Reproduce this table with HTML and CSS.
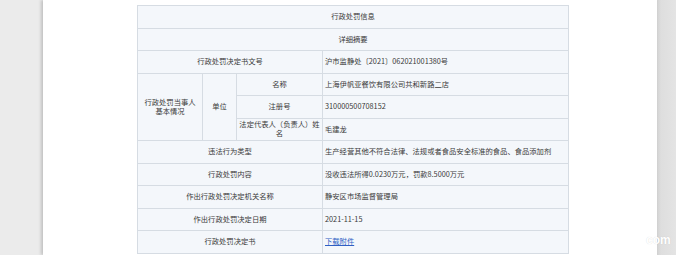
FILE: index.html
```html
<!DOCTYPE html>
<html lang="zh">
<head>
<meta charset="utf-8">
<link rel="stylesheet" href="styles.css">
</head>
<body>
<div class="page">
  <div class="side-left"></div>
  <div class="main">
    <table class="info">
      <colgroup>
        <col class="c1"><col class="c2"><col class="c3"><col class="c4">
      </colgroup>
      <tr><td colspan="4" class="head">行政处罚信息</td></tr>
      <tr><td colspan="4" class="head">详细摘要</td></tr>
      <tr><td colspan="3" class="label">行政处罚决定书文号</td><td class="val">沪市监静处〔2021〕062021001380号</td></tr>
      <tr>
        <td rowspan="3" class="label">行政处罚当事人<br>基本情况</td>
        <td rowspan="3" class="label">单位</td>
        <td class="label">名称</td>
        <td class="val">上海伊帆亚餐饮有限公司共和新路二店</td>
      </tr>
      <tr><td class="label">注册号</td><td class="val">310000500708152</td></tr>
      <tr><td class="label tight">法定代表人（负责人）姓名</td><td class="val">毛建龙</td></tr>
      <tr><td colspan="3" class="label">违法行为类型</td><td class="val">生产经营其他不符合法律、法规或者食品安全标准的食品、食品添加剂</td></tr>
      <tr><td colspan="3" class="label">行政处罚内容</td><td class="val">没收违法所得0.0230万元，罚款8.5000万元</td></tr>
      <tr><td colspan="3" class="label">作出行政处罚决定机关名称</td><td class="val">静安区市场监督管理局</td></tr>
      <tr><td colspan="3" class="label">作出行政处罚决定日期</td><td class="val">2021-11-15</td></tr>
      <tr><td colspan="3" class="label">行政处罚决定书</td><td class="val"><a href="#" class="dl">下载附件</a></td></tr>
    </table>
  </div>
  <div class="side-right"></div>
  <span class="mark">com</span>
</div>
</body>
</html>
```

FILE: styles.css
```css
html, body {
  margin: 0;
  padding: 0;
  background: #ebebeb;
}
.page {
  position: relative;
  display: flex;
  width: 676px;
  height: 255px;
  overflow: hidden;
  font-family: "Noto Sans CJK SC", "Noto Sans", sans-serif;
}
.side-left {
  width: 43px;
  background: #ebebeb;
  flex: none;
}
.main {
  flex: 1;
  background: #ffffff;
  box-shadow: -2px 0 3px rgba(0, 0, 0, 0.18);
  padding: 5px 0 0 94px;
  position: relative;
  z-index: 1;
}
.side-right {
  width: 19px;
  flex: none;
  background: linear-gradient(to right, #d2d2d2 0, #dedede 4px, #e4e4e4 100%);
}
.info {
  border-collapse: collapse;
  width: 431px;
  table-layout: fixed;
  font-size: 7.3px;
  color: #3a3a3a;
}
.c1 { width: 65px; }
.c2 { width: 34px; }
.c3 { width: 86px; }
.c4 { width: 246px; }
.info td {
  border: 1px solid #d6dce3;
  background: #f4f7fb;
  height: 21.5px;
  padding: 0 2px;
  line-height: 9px;
}
.head, .label {
  text-align: center;
}
.val {
  text-align: left;
}
.info td.tight {
  padding: 0;
}
.dl {
  color: #2f5fc4;
  text-decoration: underline;
}
.mark {
  position: absolute;
  left: 646px;
  top: 233px;
  font-size: 12px;
  font-weight: bold;
  color: #ffffff;
  font-family: "Liberation Sans", sans-serif;
  z-index: 2;
  text-shadow: 0 0 1px rgba(0,0,0,0.15);
}
```
